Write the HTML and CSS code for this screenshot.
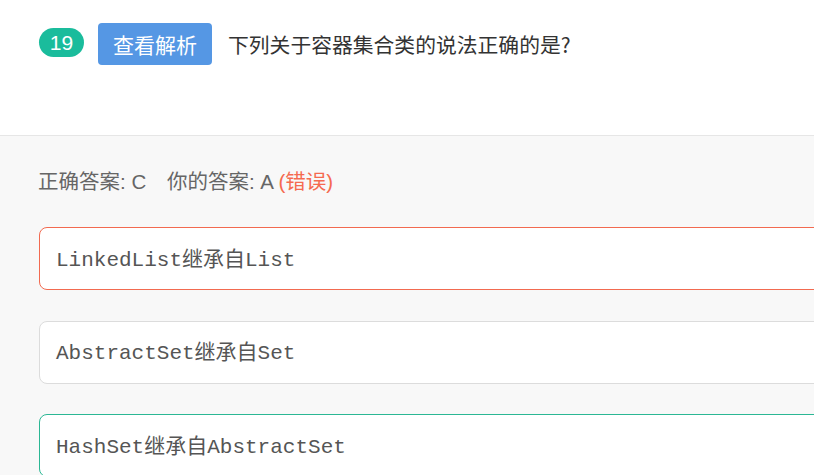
FILE: index.html
```html
<!DOCTYPE html>
<html lang="zh-CN">
<head>
<meta charset="utf-8">
<title>题目 19</title>
<link rel="stylesheet" href="styles.css">
</head>
<body>
<header class="question">
  <span class="num">19</span>
  <button class="analysis">查看解析</button>
  <span class="title">下列关于容器集合类的说法正确的是?</span>
</header>
<section class="answers">
  <p class="result">
    <span>正确答案: C</span>
    <span class="mine">你的答案: A <em class="wrong">(错误)</em></span>
  </p>
  <div class="option opt-wrong">LinkedList继承自List</div>
  <div class="option">AbstractSet继承自Set</div>
  <div class="option opt-right">HashSet继承自AbstractSet</div>
</section>
</body>
</html>
```
FILE: styles.css
```css
html, body {
  margin: 0;
  padding: 0;
}
body {
  width: 814px;
  height: 475px;
  overflow: hidden;
  background: #f8f8f8;
  font-family: "Liberation Sans", "Noto Sans CJK SC", sans-serif;
}
.question {
  display: flex;
  align-items: flex-start;
  height: 112px;
  padding: 23px 0 0 39px;
  background: #fff;
  border-bottom: 1px solid #e6e6e6;
}
.num {
  margin-top: 5px;
  width: 45px;
  height: 29px;
  border-radius: 15px;
  background: #1abc9c;
  color: #fff;
  font-size: 21px;
  line-height: 30px;
  text-align: center;
}
.analysis {
  margin-left: 14px;
  width: 114px;
  height: 42px;
  border: 0;
  border-radius: 4px;
  background: #5597e4;
  color: #fff;
  font-family: "Noto Sans CJK SC", sans-serif;
  font-size: 21px;
  line-height: 42px;
  padding: 0;
}
.title {
  margin-left: 16px;
  margin-top: 6px;
  font-family: "Noto Sans CJK SC", sans-serif;
  font-size: 20.8px;
  line-height: 30px;
  color: #333;
}
.answers {
  padding: 31px 0 0 38px;
}
.result {
  margin: 0 0 30px;
  font-size: 20.5px;
  line-height: 30px;
  color: #666;
}
.mine {
  margin-left: 15px;
}
.wrong {
  font-style: normal;
  color: #f56a50;
}
.option {
  box-sizing: border-box;
  width: 800px;
  height: 63px;
  margin-bottom: 30.5px;
  margin-left: 1px;
  padding: 0 0 4px 16px;
  display: flex;
  align-items: center;
  background: #fff;
  border: 1px solid #dcdcdc;
  border-radius: 8px;
  font-family: "Liberation Mono", "Noto Sans CJK SC", monospace;
  font-size: 21px;
  color: #555;
}
.opt-wrong {
  border-color: #f26a50;
}
.opt-right {
  border-color: #2bb794;
}
```
